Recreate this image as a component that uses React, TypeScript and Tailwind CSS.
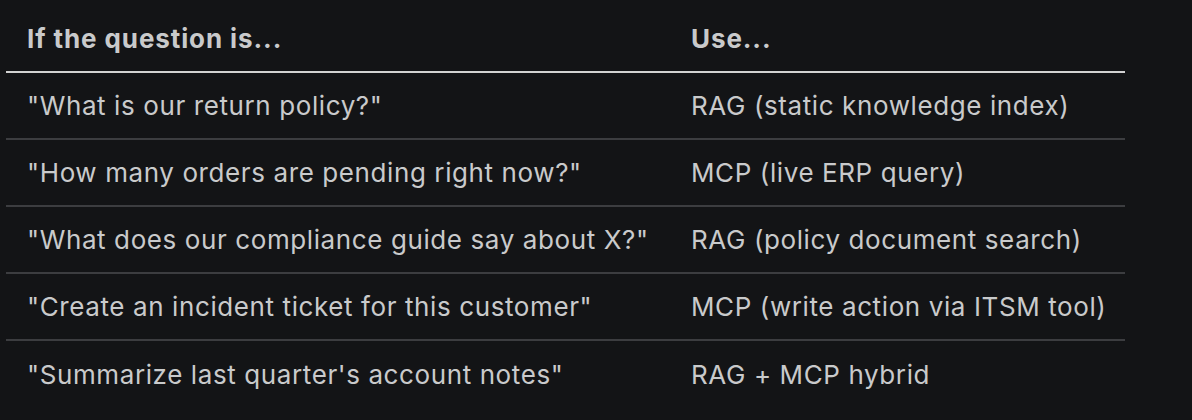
export default function App() {
  const rows = [
    ['"What is our return policy?"', 'RAG (static knowledge index)'],
    ['"How many orders are pending right now?"', 'MCP (live ERP query)'],
    ['"What does our compliance guide say about X?"', 'RAG (policy document search)'],
    ['"Create an incident ticket for this customer"', 'MCP (write action via ITSM tool)'],
    ['"Summarize last quarter\'s account notes"', 'RAG + MCP hybrid'],
  ];
  return (
    <div className="w-[1192px] h-[420px] bg-[#131416] pl-[6px] pt-[6px] overflow-hidden" style={{ fontFamily: 'Inter, "Noto Sans", sans-serif' }}>
      <div className="w-[1119px]">
        <div className="flex h-[67px] items-center border-b-2 border-[#d2d2d2] text-[26px] font-bold tracking-[0.9px] text-[#c9cacb]">
          <div className="w-[664px] pl-[21px]">If the question is...</div>
          <div className="flex-1 pl-[21px]">Use...</div>
        </div>
        {rows.map((r, i) => (
          <div key={i} className={`flex h-[67px] items-center text-[26px] tracking-[0.6px] text-[#c9cacb] ${i < rows.length - 1 ? 'border-b-2 border-[#3c3d40]' : ''}`}>
            <div className="w-[664px] pl-[21px]">{r[0]}</div>
            <div className="flex-1 pl-[21px]">{r[1]}</div>
          </div>
        ))}
      </div>
    </div>
  );
}
